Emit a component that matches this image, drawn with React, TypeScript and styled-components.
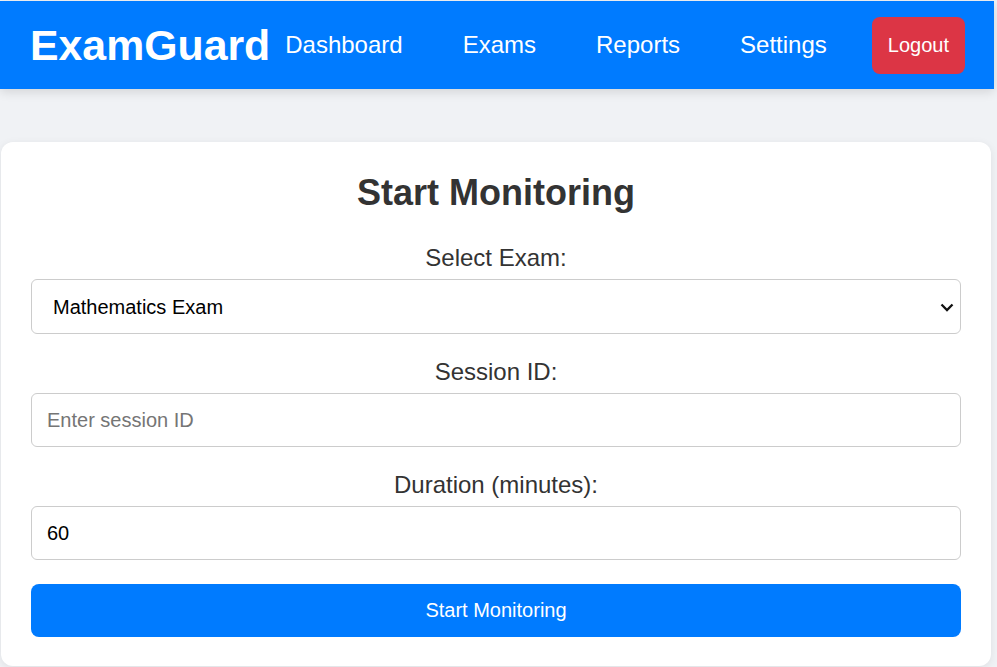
import React from "react";
import styled, { createGlobalStyle } from "styled-components";

const GlobalStyle = createGlobalStyle`
  html, body {
    margin: 0;
    padding: 0;
    background: #f0f2f5;
    font-family: "Liberation Sans", Arial, sans-serif;
  }
  * { box-sizing: border-box; }
`;

const Page = styled.div`
  padding: 1px 3px 0 0;
  min-height: 667px;
`;

const Header = styled.header`
  height: 88px;
  background: #007bff;
  display: flex;
  align-items: center;
  justify-content: space-between;
  padding: 0 31px 0 30px;
  box-shadow: 0 3px 10px rgba(0, 0, 0, 0.12);
  position: relative;
  z-index: 1;
`;

const Logo = styled.div`
  color: #fff;
  font-size: 42.8px;
  font-weight: 700;
  line-height: 1;
`;

const Nav = styled.nav`
  display: flex;
  align-items: center;
  gap: 30px;
`;

const NavLink = styled.a`
  color: #fff;
  font-size: 24px;
  text-decoration: none;
  padding: 0 15px;
`;

const LogoutButton = styled.button`
  background: #dc3545;
  color: #fff;
  border: none;
  border-radius: 8px;
  font-family: inherit;
  font-size: 20px;
  height: 57px;
  padding: 0 16px;
  cursor: pointer;
`;

const Main = styled.main`
  padding: 53px 0 0 1px;
`;

const Card = styled.section`
  width: 990px;
  background: #fff;
  border-radius: 12px;
  box-shadow: 0 2px 8px rgba(0, 0, 0, 0.08);
  padding: 30px 30px 29px 30px;
`;

const Title = styled.h2`
  margin: 0 0 30px;
  text-align: center;
  color: #333;
  font-size: 36px;
  font-weight: 700;
`;

const Group = styled.div`
  display: flex;
  flex-direction: column;
  margin-bottom: 24px;
`;

const Label = styled.label`
  text-align: center;
  color: #333;
  font-size: 24px;
  margin-bottom: 7px;
`;

const SelectWrap = styled.div`
  position: relative;
`;

const Select = styled.select`
  width: 100%;
  height: 55px;
  appearance: none;
  -webkit-appearance: none;
  border: 1px solid #ccc;
  border-radius: 6px;
  background: #fff;
  color: #000;
  font-family: inherit;
  font-size: 20px;
  padding: 0 40px 0 21px;
`;

const Chevron = styled.svg`
  position: absolute;
  right: 7px;
  top: 24px;
  width: 14px;
  height: 9px;
  pointer-events: none;
`;

const Input = styled.input`
  width: 100%;
  height: 54px;
  border: 1px solid #ccc;
  border-radius: 6px;
  background: #fff;
  color: #000;
  font-family: inherit;
  font-size: 20px;
  padding: 0 15px;
  &::placeholder { color: #757575; }
`;

const SubmitButton = styled.button`
  width: 100%;
  height: 53px;
  background: #007bff;
  color: #fff;
  border: none;
  border-radius: 8px;
  font-family: inherit;
  font-size: 20px;
  cursor: pointer;
`;

export default function App() {
  return (
    <Page>
      <GlobalStyle />
      <Header>
        <Logo>ExamGuard</Logo>
        <Nav>
          <NavLink href="#">Dashboard</NavLink>
          <NavLink href="#">Exams</NavLink>
          <NavLink href="#">Reports</NavLink>
          <NavLink href="#">Settings</NavLink>
          <LogoutButton>Logout</LogoutButton>
        </Nav>
      </Header>
      <Main>
        <Card>
          <Title>Start Monitoring</Title>
          <Group>
            <Label htmlFor="exam">Select Exam:</Label>
            <SelectWrap>
              <Select id="exam" defaultValue="math">
                <option value="math">Mathematics Exam</option>
                <option value="phys">Physics Exam</option>
                <option value="chem">Chemistry Exam</option>
              </Select>
              <Chevron viewBox="0 0 14 9">
                <path d="M1.5 1.5 L7 7 L12.5 1.5" fill="none" stroke="#111" strokeWidth="2.3" />
              </Chevron>
            </SelectWrap>
          </Group>
          <Group>
            <Label htmlFor="session">Session ID:</Label>
            <Input id="session" placeholder="Enter session ID" />
          </Group>
          <Group>
            <Label htmlFor="duration">Duration (minutes):</Label>
            <Input id="duration" type="number" defaultValue={60} />
          </Group>
          <SubmitButton>Start Monitoring</SubmitButton>
        </Card>
      </Main>
    </Page>
  );
}
